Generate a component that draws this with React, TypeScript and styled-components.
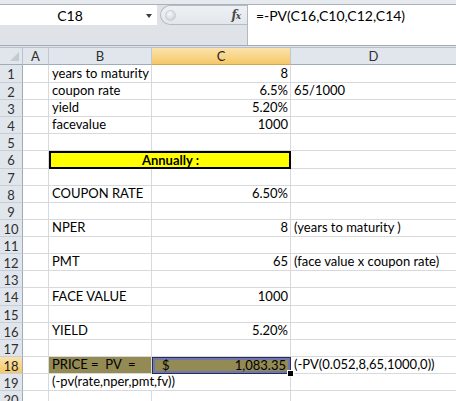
import React from "react";
import styled, { createGlobalStyle, css } from "styled-components";

const GlobalStyle = createGlobalStyle`
  html, body {
    margin: 0;
    padding: 0;
    background: #ffffff;
    overflow: hidden;
  }
  body {
    font-family: Lato, "Liberation Sans", sans-serif;
  }
`;

type Align = "left" | "right" | "center";

interface CellData {
  col: number;
  text?: string;
  right?: string;
  align?: Align;
  span?: number;
  bold?: boolean;
  fill?: string;
  framed?: boolean;
  active?: boolean;
}

const columns = ["A", "B", "C", "D"];
const rowHeights = [18, 17, 17, 17, 17, 18, 17, 17, 17, 17, 17, 17, 17, 18, 17, 17, 17, 17, 17, 17];

const cells: Record<number, CellData[]> = {
  1: [
    { col: 2, text: "years to maturity" },
    { col: 3, text: "8", align: "right" },
  ],
  2: [
    { col: 2, text: "coupon rate" },
    { col: 3, text: "6.5%", align: "right" },
    { col: 4, text: "65/1000" },
  ],
  3: [
    { col: 2, text: "yield" },
    { col: 3, text: "5.20%", align: "right" },
  ],
  4: [
    { col: 2, text: "facevalue" },
    { col: 3, text: "1000", align: "right" },
  ],
  6: [{ col: 2, span: 2, text: "Annually :", align: "center", bold: true, fill: "#ffff00", framed: true }],
  8: [
    { col: 2, text: "COUPON RATE" },
    { col: 3, text: "6.50%", align: "right" },
  ],
  10: [
    { col: 2, text: "NPER" },
    { col: 3, text: "8", align: "right" },
    { col: 4, text: "(years to maturity )" },
  ],
  12: [
    { col: 2, text: "PMT" },
    { col: 3, text: "65", align: "right" },
    { col: 4, text: "(face value x coupon rate)" },
  ],
  14: [
    { col: 2, text: "FACE VALUE" },
    { col: 3, text: "1000", align: "right" },
  ],
  16: [
    { col: 2, text: "YIELD" },
    { col: 3, text: "5.20%", align: "right" },
  ],
  18: [
    { col: 2, text: "PRICE =\u00a0 PV\u00a0 =", fill: "#948a54" },
    { col: 3, text: "$", right: "1,083.35", fill: "#948a54", active: true },
    { col: 4, text: "(-PV(0.052,8,65,1000,0))" },
  ],
  19: [{ col: 2, span: 2, text: "(-pv(rate,nper,pmt,fv))" }],
};

const App = () => {
  const activeRow = 18;
  const activeCol = 3;

  const renderRow = (row: number) => {
    const data = cells[row] || [];
    const out: React.ReactNode[] = [];
    out.push(
      <RowHeader key={`h${row}`} active={row === activeRow}>
        {row}
      </RowHeader>
    );
    let col = 1;
    while (col <= columns.length) {
      const c = data.find((d) => d.col === col);
      if (c) {
        out.push(
          <Cell
            key={`${row}-${col}`}
            align={c.align || "left"}
            span={c.span || 1}
            bold={c.bold}
            fill={c.fill}
            framed={c.framed}
            active={c.active}
          >
            <span>{c.text}</span>
            {c.right && <span>{c.right}</span>}
            {c.active && <FillHandle />}
          </Cell>
        );
        col += c.span || 1;
      } else {
        out.push(<Cell key={`${row}-${col}`} align="left" span={1} />);
        col += 1;
      }
    }
    return out;
  };

  return (
    <>
      <GlobalStyle />
      <Window>
        <TopStrip />
        <FormulaBar>
          <NameColumn>
            <NameBox>
              <NameText>C18</NameText>
              <DropArrow />
            </NameBox>
          </NameColumn>
          <FxPanel>
            <Knob />
            <FxLabel>
              f<sub>x</sub>
            </FxLabel>
          </FxPanel>
          <FormulaInput>=-PV(C16,C10,C12,C14)</FormulaInput>
        </FormulaBar>
        <BarGap />
        <Sheet rows={rowHeights}>
          <Corner>
            <CornerTriangle />
          </Corner>
          {columns.map((c, i) => (
            <ColHeader key={c} active={i + 1 === activeCol}>
              {c}
            </ColHeader>
          ))}
          {rowHeights.map((_, i) => renderRow(i + 1))}
        </Sheet>
      </Window>
    </>
  );
};

const Window = styled.div`
  width: 456px;
  height: 401px;
  overflow: hidden;
  background: #ffffff;
  display: flex;
  flex-direction: column;
`;

const TopStrip = styled.div`
  height: 4px;
  background: #e6eaef;
  border-bottom: 1px solid #a9b1bb;
  flex: none;
`;

const FormulaBar = styled.div`
  display: flex;
  height: 40px;
  background: #dfe3e8;
  border-bottom: 1px solid #a3acb7;
  flex: none;
`;

const NameColumn = styled.div`
  width: 157px;
  display: flex;
  flex-direction: column;
`;

const NameBox = styled.div`
  height: 20px;
  background: #ffffff;
  display: flex;
  align-items: center;
  position: relative;
`;

const NameText = styled.span`
  width: 140px;
  text-align: center;
  font-size: 14px;
  color: #000;
`;

const DropArrow = styled.span`
  width: 0;
  height: 0;
  margin-left: 6px;
  border-left: 3.5px solid transparent;
  border-right: 3.5px solid transparent;
  border-top: 4px solid #3c3c3c;
  margin-top: 2px;
`;

const FxPanel = styled.div`
  width: 87px;
  height: 20px;
  box-sizing: border-box;
  margin-left: 3px;
  border: 1px solid #b4bcc6;
  border-right: none;
  border-radius: 10px 0 0 10px;
  background: linear-gradient(#eef1f4, #e3e7ec);
  display: flex;
  align-items: center;
  justify-content: space-between;
  padding: 0 7px 0 4px;
`;

const Knob = styled.span`
  width: 9px;
  height: 9px;
  border-radius: 50%;
  background: radial-gradient(circle at 40% 35%, #f7f8fa, #c3c8cf);
  border: 1px solid #c8cdd4;
`;

const FxLabel = styled.span`
  font-family: "DejaVu Serif", "Liberation Serif", serif;
  font-style: italic;
  font-weight: bold;
  font-size: 12px;
  color: #4a4a4a;
  letter-spacing: -1px;
  sub {
    font-size: 9px;
    vertical-align: 0;
  }
`;

const FormulaInput = styled.div`
  flex: 1;
  background: #ffffff;
  border-left: 1px solid #b0b8c2;
  padding: 2px 0 0 8px;
  font-size: 14px;
  color: #000;
  line-height: 17px;
`;

const BarGap = styled.div`
  height: 1px;
  background: #dfe3e8;
  border-bottom: 1px solid #b9c1cb;
  flex: none;
`;

const Sheet = styled.div<{ rows: number[] }>`
  display: grid;
  grid-template-columns: 23px 26px 103px 139px 166px;
  grid-template-rows: 17px ${(p) => p.rows.map((r) => `${r}px`).join(" ")};
  font-size: 13px;
  color: #000;
`;

const headerBase = css`
  box-sizing: border-box;
  background: #e1e6ec;
  color: #2f2f2f;
  font-size: 13px;
  display: flex;
  align-items: center;
  justify-content: center;
`;

const activeHeader = css`
  background: linear-gradient(#fbe3ad, #f4c867);
  color: #1e1e1e;
`;

const Corner = styled.div`
  ${headerBase};
  border-right: 1px solid #b9c1cb;
  border-bottom: 1px solid #9eabb9;
  position: relative;
`;

const CornerTriangle = styled.span`
  position: absolute;
  right: 3px;
  bottom: 3px;
  width: 0;
  height: 0;
  border-left: 9px solid transparent;
  border-bottom: 9px solid #c4cad2;
`;

const ColHeader = styled.div<{ active?: boolean }>`
  ${headerBase};
  border-right: 1px solid #c0c8d2;
  border-bottom: 1px solid ${(p) => (p.active ? "#d6a54a" : "#9eabb9")};
  ${(p) => p.active && activeHeader};
`;

const RowHeader = styled.div<{ active?: boolean }>`
  ${headerBase};
  border-right: 1px solid #9eabb9;
  border-bottom: 1px solid #c6ced8;
  padding-top: 1px;
  ${(p) => p.active && activeHeader};
`;

const Cell = styled.div<{
  align: Align;
  span: number;
  bold?: boolean;
  fill?: string;
  framed?: boolean;
  active?: boolean;
}>`
  box-sizing: border-box;
  grid-column: span ${(p) => p.span};
  border-right: 1px solid #d7d9dc;
  border-bottom: 1px solid #d7d9dc;
  background: ${(p) => p.fill || "transparent"};
  font-weight: ${(p) => (p.bold ? 700 : 400)};
  display: flex;
  align-items: flex-end;
  justify-content: ${(p) =>
    p.align === "right" ? "flex-end" : p.align === "center" ? "center" : "flex-start"};
  padding: 0 2px 1px 3px;
  white-space: nowrap;
  line-height: 15px;
  position: relative;
  ${(p) =>
    p.framed &&
    css`
      border: 2px solid #000;
      line-height: 13px;
      padding-bottom: 0;
    `}
  ${(p) =>
    p.active &&
    css`
      justify-content: space-between;
      border: 1px solid #2a2c52;
      box-shadow: inset 0 0 0 2px #6f77b3;
      padding: 0 4px 0 9px;
    `}
`;

const FillHandle = styled.span`
  position: absolute;
  right: -4px;
  bottom: -4px;
  width: 5px;
  height: 5px;
  background: #000;
  border: 1px solid #fff;
  z-index: 2;
`;

export default App;
